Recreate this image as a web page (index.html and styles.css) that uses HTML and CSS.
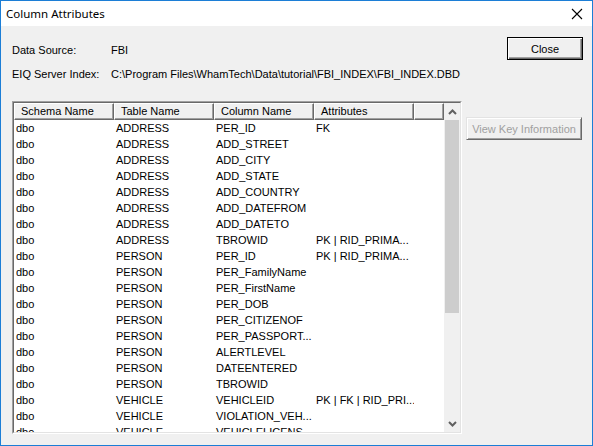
FILE: index.html
```html
<!DOCTYPE html>
<html>
<head>
<meta charset="utf-8">
<link rel="stylesheet" href="styles.css">
</head>
<body>
<div class="window">
  <div class="titlebar">
    <span class="title">Column Attributes</span>
    <span class="close-x">
      <svg width="12" height="12" viewBox="0 0 12 12"><path d="M1 1 L11 11 M11 1 L1 11" stroke="#000" stroke-width="1.1" fill="none"/></svg>
    </span>
  </div>
  <div class="content">
    <div class="main">
      <div class="info-row"><span class="label">Data Source:</span><span>FBI</span></div>
      <div class="info-row"><span class="label">EIQ Server Index:</span><span>C:\Program Files\WhamTech\Data\tutorial\FBI_INDEX\FBI_INDEX.DBD</span></div>
      <div class="listbox">
        <div class="listarea">
          <div class="header">
            <div class="hcell">Schema Name</div>
            <div class="hcell">Table Name</div>
            <div class="hcell">Column Name</div>
            <div class="hcell">Attributes</div>
            <div class="hcell hfill"></div>
          </div>
          <div class="rows">
            <div class="row"><span>dbo</span><span>ADDRESS</span><span>PER_ID</span><span>FK</span></div>
            <div class="row"><span>dbo</span><span>ADDRESS</span><span>ADD_STREET</span><span></span></div>
            <div class="row"><span>dbo</span><span>ADDRESS</span><span>ADD_CITY</span><span></span></div>
            <div class="row"><span>dbo</span><span>ADDRESS</span><span>ADD_STATE</span><span></span></div>
            <div class="row"><span>dbo</span><span>ADDRESS</span><span>ADD_COUNTRY</span><span></span></div>
            <div class="row"><span>dbo</span><span>ADDRESS</span><span>ADD_DATEFROM</span><span></span></div>
            <div class="row"><span>dbo</span><span>ADDRESS</span><span>ADD_DATETO</span><span></span></div>
            <div class="row"><span>dbo</span><span>ADDRESS</span><span>TBROWID</span><span>PK | RID_PRIMA...</span></div>
            <div class="row"><span>dbo</span><span>PERSON</span><span>PER_ID</span><span>PK | RID_PRIMA...</span></div>
            <div class="row"><span>dbo</span><span>PERSON</span><span>PER_FamilyName</span><span></span></div>
            <div class="row"><span>dbo</span><span>PERSON</span><span>PER_FirstName</span><span></span></div>
            <div class="row"><span>dbo</span><span>PERSON</span><span>PER_DOB</span><span></span></div>
            <div class="row"><span>dbo</span><span>PERSON</span><span>PER_CITIZENOF</span><span></span></div>
            <div class="row"><span>dbo</span><span>PERSON</span><span>PER_PASSPORT...</span><span></span></div>
            <div class="row"><span>dbo</span><span>PERSON</span><span>ALERTLEVEL</span><span></span></div>
            <div class="row"><span>dbo</span><span>PERSON</span><span>DATEENTERED</span><span></span></div>
            <div class="row"><span>dbo</span><span>PERSON</span><span>TBROWID</span><span></span></div>
            <div class="row"><span>dbo</span><span>VEHICLE</span><span>VEHICLEID</span><span>PK | FK | RID_PRI...</span></div>
            <div class="row"><span>dbo</span><span>VEHICLE</span><span>VIOLATION_VEH...</span><span></span></div>
            <div class="row"><span>dbo</span><span>VEHICLE</span><span>VEHICLELICENS</span><span></span></div>
          </div>
        </div>
        <div class="scrollbar">
          <div class="sbtn"><svg width="9" height="6" viewBox="0 0 9 6"><path d="M1 5 L4.5 1.5 L8 5" stroke="#606060" stroke-width="2" fill="none"/></svg></div>
          <div class="track"><div class="thumb"></div></div>
          <div class="sbtn"><svg width="9" height="6" viewBox="0 0 9 6"><path d="M1 1 L4.5 4.5 L8 1" stroke="#606060" stroke-width="2" fill="none"/></svg></div>
        </div>
      </div>
    </div>
    <div class="side">
      <div class="btn btn-default">Close</div>
      <div class="btn btn-disabled">View Key Information</div>
    </div>
  </div>
</div>
</body>
</html>
```
FILE: styles.css
```css
* { box-sizing: border-box; }
html, body { margin: 0; padding: 0; }
body {
  width: 593px;
  height: 446px;
  overflow: hidden;
  font-family: "Liberation Sans", Arial, sans-serif;
  font-size: 11px;
  color: #000;
}
.window {
  width: 593px;
  height: 446px;
  border: 1px solid #1c7ed6;
  background: #f0f0f0;
  display: flex;
  flex-direction: column;
}
.titlebar {
  height: 25px;
  background: #fff;
  display: flex;
  align-items: center;
  justify-content: space-between;
  padding-left: 5px;
  padding-right: 9px;
  flex: none;
}
.title {
  font-family: "Noto Sans", "Open Sans", sans-serif;
  font-size: 11.5px;
  margin-top: -1px;
}
.close-x { display: flex; align-items: center; }
.content {
  flex: 1;
  display: flex;
  padding: 0 9px 0 11px;
}
.main {
  width: 450px;
  display: flex;
  flex-direction: column;
}
.info-row {
  height: 14px;
  line-height: 14px;
  display: flex;
  white-space: nowrap;
  margin-top: 10px;
}
.info-row:first-child { margin-top: 17px; }
.label { width: 99px; flex: none; }
.listbox {
  margin-top: 20px;
  height: 333px;
  border-style: solid;
  border-width: 1px;
  border-color: #a0a0a0 #fff #fff #a0a0a0;
  display: flex;
}
.listbox > * { }
.listarea {
  flex: 1;
  display: flex;
  flex-direction: column;
  background: #fff;
  border-top: 1px solid #696969;
  border-left: 1px solid #696969;
  border-bottom: 1px solid #e3e3e3;
  overflow: hidden;
}
.header {
  height: 17px;
  display: flex;
  flex: none;
}
.hcell {
  width: 100px;
  flex: none;
  height: 17px;
  line-height: 15px;
  padding-left: 6px;
  background: #f0f0f0;
  border-top: 1px solid #fff;
  border-left: 1px solid #fff;
  border-right: 1px solid #696969;
  border-bottom: 1px solid #696969;
  box-shadow: inset -1px -1px 0 #a0a0a0;
  white-space: nowrap;
  overflow: hidden;
}
.hcell.hfill { flex: 1; width: auto; }
.rows { flex: 1; overflow: hidden; }
.row {
  height: 16px;
  line-height: 16px;
  display: flex;
  white-space: nowrap;
}
.row span {
  width: 100px;
  flex: none;
  padding-left: 2px;
  overflow: hidden;
}
.scrollbar {
  width: 17px;
  flex: none;
  display: flex;
  flex-direction: column;
  background: #f0f0f0;
  border-top: 1px solid #696969;
  border-right: 1px solid #e3e3e3;
  border-bottom: 1px solid #e3e3e3;
}
.sbtn {
  height: 17px;
  flex: none;
  display: flex;
  align-items: center;
  justify-content: center;
}
.track { flex: 1; padding: 0 1px; }
.thumb { height: 193px; background: #cdcdcd; }
.side {
  flex: 1;
  display: flex;
  flex-direction: column;
  align-items: flex-end;
}
.btn {
  height: 23px;
  display: flex;
  align-items: center;
  justify-content: center;
  background: #f0f0f0;
  white-space: nowrap;
}
.btn-default {
  width: 76px;
  margin-top: 11px;
  border: 1px solid #000;
  box-shadow: inset 1px 1px 0 #fff, inset -1px -1px 0 #696969, inset -2px -2px 0 #a0a0a0;
}
.btn-disabled {
  width: 116px;
  margin-top: 57px;
  margin-right: 1px;
  color: #a0a0a0;
  border-style: solid;
  border-width: 1px;
  border-color: #e3e3e3 #696969 #696969 #e3e3e3;
  box-shadow: inset 1px 1px 0 #fff, inset -1px -1px 0 #a0a0a0;
}
```
